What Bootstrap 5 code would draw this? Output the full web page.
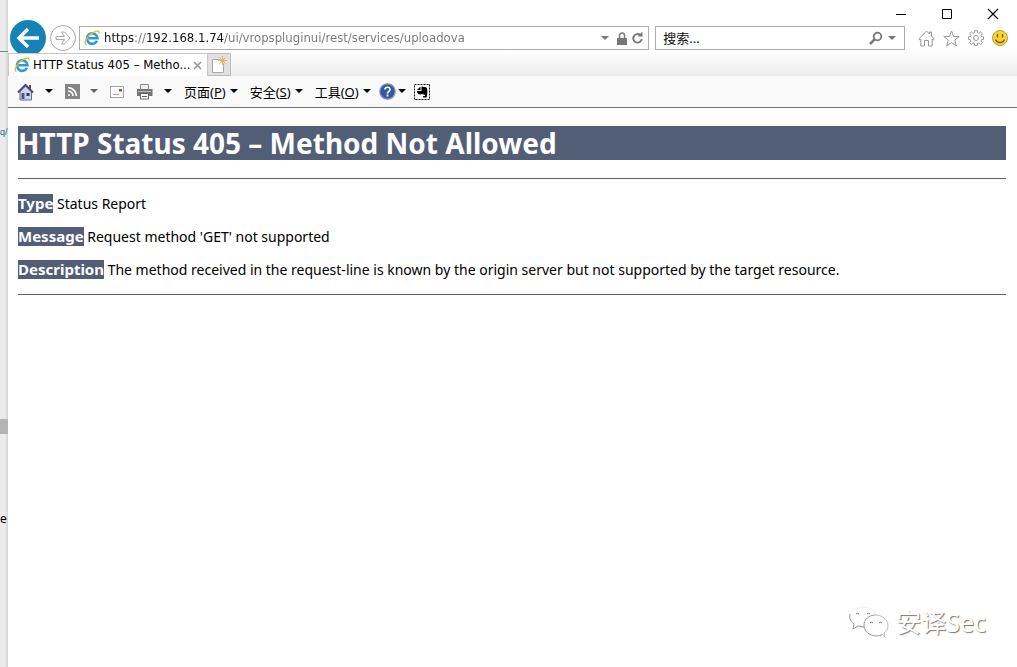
<!DOCTYPE html>
<html lang="zh-CN">
<head>
<meta charset="utf-8">
<meta name="viewport" content="width=device-width, initial-scale=1">
<title>HTTP Status 405 – Method Not Allowed</title>
<link href="https://cdn.jsdelivr.net/npm/bootstrap@5.3.0/dist/css/bootstrap.min.css" rel="stylesheet">
<style>
  body { font-family: "Noto Sans", "Noto Sans CJK SC", sans-serif; font-size: 13px; line-height: 20px; color: #000; background: #fff; }
  button { border: 0; padding: 0; background: none; color: inherit; display: flex; align-items: center; justify-content: center; flex: none; }
  svg { display: block; flex: none; }
  .behind { width: 8px; flex: none; background: linear-gradient(to right, #ebebeb 5px, #d2d2d2); overflow: hidden; font-size: 12px; }
  .behind .head-edge { height: 52px; border-bottom: 1px solid #5f9488; }
  .behind .link-tail { margin-top: 70px; color: #1f6592; font-family: "Liberation Sans", sans-serif; font-size: 9px; height: 20px; }
  .behind .thumb { margin-top: 277px; height: 15px; background: #b4b4b4; }
  .behind .letter { margin-top: 75px; }
  .caption-bar { height: 26px; padding: 2px 18px 0 0; gap: 34px; }
  .caption-bar button { width: 12px; height: 24px; }
  .nav-row { height: 24px; padding: 0 9px 0 2px; position: relative; z-index: 1; }
  .back { width: 36px; height: 36px; border-radius: 50%; background: #1583b5; }
  .forward { width: 26px; height: 26px; border-radius: 50%; border: 1px solid #a9a9a9; margin: 0 3px 0 4px; background: #fff; }
  .field { border: 1px solid #adadad; background: #fff; height: 24px; min-width: 0; }
  .field input { border: 0; padding: 0; outline: 0; min-width: 0; flex: 1; height: 20px; }
  .address { flex: 561 1 0; padding: 0 4px; }
  .address input, .page-tab { font-family: "DejaVu Sans Condensed", "DejaVu Sans", sans-serif; }
  .address input { color: #777; margin-left: 4px; -webkit-text-fill-color: transparent;
    background: linear-gradient(to right, #111 30px, #777 30px, #777 42px, #111 42px, #111 120px, #777 120px); -webkit-background-clip: text; background-clip: text; }
  .search { flex: 233 1 0; margin-left: 6px; padding: 0 8px 0 7px; }
  .search input::placeholder { color: #111; opacity: 1; }
  .tools { gap: 8px; margin-left: 13px; }
  .tab-row { height: 26px; padding: 3px 0 0 0; background: linear-gradient(#fff, #ececec); }
  .page-tab { width: 200px; height: 23px; border: 1px solid #c9c9c9; border-bottom: 0; background: #fff; padding: 0 5px; position: relative; z-index: 2; }
  .page-tab span { margin: 0 2px 0 3px; flex: 1; white-space: nowrap; }
  .new-tab { width: 23px; height: 23px; background: #e0e0e0; border: 1px solid #bcbcbc; border-left: 0; }
  .command-bar { height: 32px; background: #f9f9f9; border-bottom: 1px solid #6f6f6f; padding-left: 9px; }
  .command-bar button { height: 26px; }
  .split { gap: 10px; }
  .menu-text { gap: 4px; }
  .report { padding: 18px 11px 0 10px; font-size: 14px; }
  .report h1 { font-size: 28px; line-height: 34px; font-weight: 700; margin: 0 0 18px; }
  .report h1, .report b { color: #fff; background: #525d76; }
  .report b { display: inline-block; line-height: 19px; font-size: 15px; }
  .report p { margin: 0 0 14px; line-height: 19px; }
  .report hr { margin: 15px 0; border: 0; height: 1px; background: #5b5f66; opacity: 1; }
  .brand-mark { margin: auto 31px 28px auto; gap: 6px; font-size: 25px; line-height: 32px; color: #fff; text-shadow: 1px 1px 1px #777; }
</style>
</head>
<body>
<div class="d-flex min-vh-100">
  <div class="behind" aria-hidden="true">
    <div class="head-edge"></div>
    <div class="link-tail">q/</div>
    <div class="thumb"></div>
    <div class="letter">e</div>
  </div>
  <div class="d-flex flex-column flex-grow-1">
    <header>
      <div class="caption-bar d-flex justify-content-end">
        <button aria-label="最小化"><svg width="12" height="12"><path d="M1 6.500h10" stroke="#000"/></svg></button>
        <button aria-label="最大化"><svg width="12" height="12"><path d="M1.500 1.500h9v9h-9z" fill="none" stroke="#000"/></svg></button>
        <button aria-label="关闭"><svg width="12" height="12"><path d="M1 1l10 10M11 1L1 11" stroke="#000" stroke-width="1.200"/></svg></button>
      </div>
      <div class="nav-row d-flex align-items-center">
        <button class="back" aria-label="后退"><svg width="24" height="24" fill="none" stroke="#fff" stroke-width="3.400"><path d="M3 12h20M12 3l-9 9 9 9"/></svg></button>
        <button class="forward" aria-label="前进"><svg width="18" height="18" fill="none" stroke="#a9a9a9"><path d="M2 7.500h8.500L7.500 3h3L16 9l-5.500 6h-3l3-4.500H2z"/></svg></button>
        <div class="field address d-flex align-items-center">
          <svg width="16" height="16" viewBox="0 0 16 16" fill="none"><path d="M13 10.800A5.300 5.300 0 1 1 13.500 8.300H4.500" stroke="#2d9bd3" stroke-width="2.600"/><path d="M2.500 14.800C-.5 13.500 2.500 7 7.500 3.500 11 1 15.800-.5 15 3.600" stroke="#e5bd2e" stroke-width="1.400"/></svg>
          <input type="text" aria-label="地址" value="https://192.168.1.74/ui/vropspluginui/rest/services/uploadova">
          <button aria-label="显示地址列表"><svg width="8" height="5"><path d="M0 0h8L4 4z" fill="#777"/></svg></button>
          <button class="ms-2" aria-label="安全报告"><svg width="10" height="13"><path d="M0 6h10v7H0z" fill="#777"/><path d="M2.500 7V3.500a2.500 2.500 0 0 1 5 0V7" fill="none" stroke="#777" stroke-width="1.500"/></svg></button>
          <button class="ms-1" aria-label="刷新"><svg width="13" height="14" viewBox="0 0 13 14"><path d="M9.500 4.200A4.300 4.300 0 1 0 10.800 8" fill="none" stroke="#777" stroke-width="1.900"/><path d="M6.500 5.500h5V.5z" fill="#777"/></svg></button>
        </div>
        <div class="field search d-flex align-items-center">
          <input type="text" aria-label="搜索" placeholder="搜索...">
          <button aria-label="执行搜索"><svg width="14" height="14" fill="none" stroke="#777"><circle cx="8.500" cy="5.500" r="3.800" stroke-width="1.800"/><path d="M5.800 8.200L1 13" stroke-width="2.500"/></svg></button>
          <button class="ms-1" aria-label="搜索选项"><svg width="9" height="5"><path d="M1 0h8L5 4z" fill="#777"/></svg></button>
        </div>
        <div class="tools d-flex align-items-center">
          <button aria-label="主页"><svg width="17" height="17" fill="none" stroke="#999"><path d="M.8 9L8.500 1 11.500 4V2h2v4l2.700 3-1 1-1-.8V16h-3.700v-5.500h-4V16H2.800V9.200l-1 .8z"/></svg></button>
          <button aria-label="收藏夹"><svg width="17" height="17" fill="none" stroke="#999"><path d="M8.500 1l2 5.500h5.700l-4.500 3.600 1.700 5.900-4.900-3.500L3.600 16l1.700-5.900L.8 6.500h5.700z"/></svg></button>
          <button aria-label="工具"><svg width="16" height="16" viewBox="0 0 16 16" fill="none" stroke="#999"><path d="M6.700.7h2.600l.3 2 1.300.6 1.700-1.300 1.700 1.700L13 5.300l.5 1.300 2 .3v2.500l-2 .3-.6 1.300 1.300 1.700-1.700 1.700-1.700-1.300-1.300.5-.3 2H6.700l-.3-2-1.300-.5-1.700 1.300L1.700 12.700 3 11l-.6-1.300-2-.3V6.900l2-.3.6-1.300-1.300-1.600L3.400 2l1.700 1.300 1.300-.6z"/><circle cx="8" cy="8" r="2.500"/></svg></button>
          <button aria-label="反馈"><svg width="16" height="16" viewBox="0 0 16 16"><circle cx="8" cy="8" r="7.500" fill="#f6d532" stroke="#b99a3b"/><path d="M5.500 4v3.500M10.500 4v3.500M3.500 9.500c1.500 4 7.500 4 9 0" fill="none" stroke="#7a5c12" stroke-width="1.300"/></svg></button>
        </div>
      </div>
      <div class="tab-row d-flex">
        <div class="page-tab d-flex align-items-center">
          <svg width="16" height="16" viewBox="0 0 16 16" fill="none"><path d="M13 10.800A5.300 5.300 0 1 1 13.500 8.300H4.500" stroke="#2d9bd3" stroke-width="2.600"/><path d="M2.500 14.800C-.5 13.500 2.500 7 7.500 3.500 11 1 15.800-.5 15 3.600" stroke="#e5bd2e" stroke-width="1.400"/></svg>
          <span>HTTP Status 405 – Metho...</span>
          <button aria-label="关闭标签页"><svg width="9" height="9"><path d="M1 1l7 7M8 1L1 8" stroke="#999" stroke-width="1.700"/></svg></button>
        </div>
        <button class="new-tab" aria-label="新建标签页"><svg width="16" height="18" fill="none"><path d="M1.500 3.500h7L12.500 8v8.500h-11z" fill="#fff" stroke="#aaa"/><path d="M11.500 0v9M7 4.500h9M8.500 1.500l6 6M14.500 1.500l-6 6" stroke="#e6b450"/></svg></button>
      </div>
      <div class="command-bar d-flex align-items-center">
        <button class="split" aria-label="主页"><svg width="18" height="18"><path d="M3 8v9h11.500V8L8.500 3z" fill="#cdd5ee" stroke="#66709c"/><path d="M1 9.500L8.500 2 16 9.500" fill="none" stroke="#3f4c84" stroke-width="2"/><path d="M12 2h2v4h-2z" fill="#843c48"/><path d="M4.500 10h3v6h-3z" fill="#4c5689"/><path d="M9.500 10h3v3h-3z" fill="#2d3764"/></svg><svg width="8" height="5"><path d="M0 0h8L4 4z"/></svg></button>
        <button class="split ms-2" aria-label="源"><svg class="ms-1" width="15" height="15" fill="none" stroke="#fff" stroke-width="1.700"><path d="M0 0h15v15H0z" fill="#858585" stroke="none"/><path d="M3 3.500a9 9 0 0 1 8.500 8.500M3 7a5 5 0 0 1 5 5"/><circle cx="4" cy="11" r="1" fill="#fff" stroke="none"/></svg><svg width="8" height="5"><path d="M0 0h8L4 4z" fill="#666"/></svg></button>
        <button class="ms-2" aria-label="阅读邮件"><svg class="ms-1" width="14" height="12"><path d="M.5.5h13v11H.5z" fill="#fff" stroke="#a5a5a5"/><path d="M9 3h3v2.500H9z" fill="#b54343"/><path d="M3 8.500h6" stroke="#aaa"/></svg></button>
        <button class="split ms-2" aria-label="打印"><svg class="ms-1" width="18" height="16"><path d="M4.500.5h8v5h-8z" fill="#eee" stroke="#888"/><path d="M1 5h15.500v7H1z" fill="#747474"/><path d="M2 7.500h13" stroke="#bbb"/><path d="M4.500 9.500h8v5.500h-8z" fill="#fff" stroke="#666"/><path d="M6 12.500h5" stroke="#4c6a52"/></svg><svg width="8" height="5"><path d="M0 0h8L4 4z"/></svg></button>
        <button class="menu-text ms-2"><span class="ms-1">页面(<u>P</u>)</span><svg width="8" height="5"><path d="M0 0h8L4 4z"/></svg></button>
        <button class="menu-text ms-2"><span class="ms-1">安全(<u>S</u>)</span><svg width="8" height="5"><path d="M0 0h8L4 4z"/></svg></button>
        <button class="menu-text ms-2"><span class="ms-1">工具(<u>O</u>)</span><svg width="8" height="5"><path d="M0 0h8L4 4z"/></svg></button>
        <button class="ms-2" aria-label="帮助"><svg width="17" height="17"><circle cx="8.500" cy="8.500" r="7.700" fill="#3656a4" stroke="#8795b8" stroke-width="1.300"/><path d="M6 6.500c0-3 5-3 5 0 0 2-2.500 2-2.500 4M8.500 11.500v2" fill="none" stroke="#fff" stroke-width="1.700"/></svg><svg width="10" height="5"><path d="M2 0h8L6 4z"/></svg></button>
        <button class="ms-2" aria-label="剪藏"><svg width="16" height="16"><path d="M.5.500h15v15H.5z" fill="#fff" stroke="#000" stroke-dasharray="2 1"/><path d="M6.500 2.500L3 6h3.500zM7.500 2.500V7H3c0 2.500 1 3.500 3.500 3.500.8 0 1.500-.5 1.500-1.300.5 1.800 3 .8 3 2.300 0 1-2 .5-2 .5v1.500h3.500c1-2 1.200-8 .2-9.700C12 3 9.500 3 7.500 2.500z"/></svg></button>
      </div>
    </header>
    <main class="report">
      <h1>HTTP Status 405 – Method Not Allowed</h1>
      <hr>
      <p><b>Type</b> Status Report</p>
      <p><b>Message</b> Request method 'GET' not supported</p>
      <p><b>Description</b> The method received in the request-line is known by the origin server but not supported by the target resource.</p>
      <hr>
    </main>
    <div class="brand-mark d-flex align-items-center">
      <svg width="42" height="34" viewBox="0 0 42 34" fill="none" stroke="#999"><path d="M17 22c-3 0-5-.3-7-1l-5 3 1-5C-2 13 2 2 15 2c7 0 12 4 13 8" stroke="#eee"/><path d="M2 9c-1 5 1 8 4 10l-1 5 5-3 6 1"/><path d="M35 29.500c-9 4-19-1-19-9 0-6 5-10.500 11.500-10.500"/><path d="M27.500 10C34 10 40 15 40 20.500c0 3-1.500 5.500-4 7.500l1 4.500-2-3" stroke="#bbb"/><path d="M8 9a2 2 0 0 1 3 0M19 9a2 2 0 0 1 3 0M22 18a2 2 0 0 1 3 0M31 18a2 2 0 0 1 3 0" stroke="#777"/></svg>
      <span>安译Sec</span>
    </div>
  </div>
</div>
<script src="https://cdn.jsdelivr.net/npm/bootstrap@5.3.0/dist/js/bootstrap.bundle.min.js"></script>
</body>
</html>
